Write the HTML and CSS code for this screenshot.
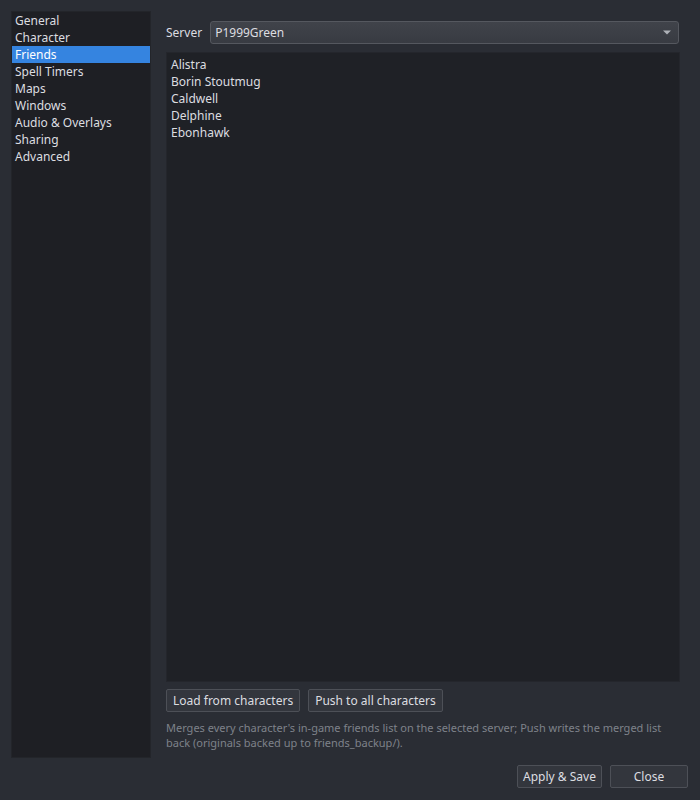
FILE: index.html
```html
<!DOCTYPE html>
<html>
<head>
<meta charset="utf-8">
<link rel="stylesheet" href="styles.css">
</head>
<body>
<div class="window">
  <div class="main">
    <ul class="nav">
      <li>General</li>
      <li>Character</li>
      <li class="active">Friends</li>
      <li>Spell Timers</li>
      <li>Maps</li>
      <li>Windows</li>
      <li>Audio &amp; Overlays</li>
      <li>Sharing</li>
      <li>Advanced</li>
    </ul>
    <div class="page">
      <div class="server-row">
        <span class="label">Server</span>
        <div class="combo">
          <span>P1999Green</span>
          <svg class="arrow" width="8" height="5" viewBox="0 0 8 5"><path d="M0 0.5 L8 0.5 L4 4.5 Z" fill="#aeb1b7"/></svg>
        </div>
      </div>
      <ul class="friends">
        <li>Alistra</li>
        <li>Borin Stoutmug</li>
        <li>Caldwell</li>
        <li>Delphine</li>
        <li>Ebonhawk</li>
      </ul>
      <div class="actions">
        <button class="btn">Load from characters</button>
        <button class="btn">Push to all characters</button>
      </div>
      <p class="help">Merges every character's in-game friends list on the selected server; Push writes the merged list back (originals backed up to friends_backup/).</p>
    </div>
  </div>
  <div class="footer">
    <button class="btn apply">Apply &amp; Save</button>
    <button class="btn close">Close</button>
  </div>
</div>
</body>
</html>
```
FILE: styles.css
```css
html, body {
  margin: 0;
  padding: 0;
}
body {
  background: #2a2d34;
  color: #dcdde0;
  font-family: "Noto Sans", "Open Sans", sans-serif;
  font-size: 12px;
  width: 700px;
  height: 800px;
  overflow: hidden;
}
.window {
  padding: 11px 12px 0 11px;
}
.main {
  display: flex;
  height: 747px;
}
.nav {
  list-style: none;
  margin: 0;
  padding: 0;
  width: 138px;
  background: #1e1f24;
  border: 1px solid #23252a;
}
.nav li {
  height: 17px;
  line-height: 17px;
  padding-left: 3px;
  white-space: nowrap;
}
.nav li.active {
  background: #3584e0;
  color: #ffffff;
}
.page {
  flex: 1;
  display: flex;
  flex-direction: column;
  padding: 10px 8px 8px 15px;
}
.server-row {
  display: flex;
  align-items: center;
  gap: 8px;
  height: 23px;
}
.label {
  color: #dcdde0;
}
.combo {
  flex: 1;
  height: 21px;
  margin-right: 1px;
  display: flex;
  align-items: center;
  justify-content: space-between;
  padding: 0 7px 0 4px;
  border: 1px solid #55585f;
  border-radius: 3px;
  background: linear-gradient(#40434a, #383b42);
}
.arrow {
  display: block;
}
.friends {
  list-style: none;
  margin: 8px 0 0 0;
  padding: 3px 4px;
  flex: 1;
  background: #1f2126;
  border: 1px solid #24262c;
}
.friends li {
  height: 17px;
  line-height: 17px;
}
.actions {
  display: flex;
  gap: 8px;
  margin-top: 7px;
}
.btn {
  font-family: "Noto Sans", "Open Sans", sans-serif;
  font-size: 12px;
  color: #dcdde0;
  height: 23px;
  padding: 0 6px;
  white-space: nowrap;
  background: #33363d;
  border: 1px solid #4d5057;
  border-radius: 2px;
}
.help {
  margin: 8px 0 0 0;
  color: #7e828a;
  font-size: 11px;
  line-height: 15px;
}
.footer {
  display: flex;
  justify-content: flex-end;
  gap: 8px;
  margin-top: 7px;
}
.apply {
  width: 85px;
  padding: 0;
}
.close {
  width: 78px;
  padding: 0;
}
```
